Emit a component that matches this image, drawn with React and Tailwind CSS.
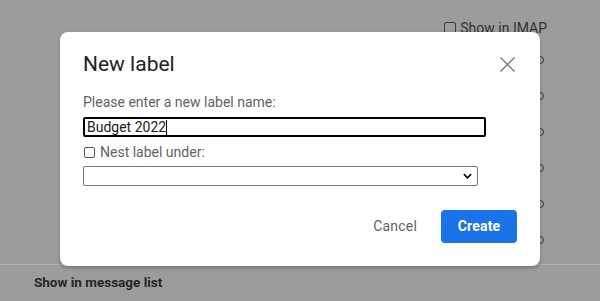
import React from 'react';

const Background = () => {
  const rows = [0, 1, 2, 3, 4, 5];
  return (
    <div className="flex flex-col h-full">
      <div className="flex justify-end items-center pt-[19px] pr-[53px] h-[37px] gap-[4px]">
        <span className="w-[12px] h-[12px] border border-[#3a3a3a] rounded-[2px]" />
        <span className="text-[14px] leading-[16px] text-[#333]">Show in IMAP</span>
      </div>
      <div className="flex flex-col items-end pr-[56px] pt-[19px] gap-[28px]">
        {rows.map((r) => (
          <span key={r} className="w-[8px] h-[8px] rounded-full border-[1.5px] border-[#3a3a3a]" />
        ))}
      </div>
      <div className="mt-auto border-t border-[#b0b0b0] h-[37px] flex items-center pl-[34px] pb-[2px]">
        <span className="text-[13.5px] font-bold text-[#262626]">Show in message list</span>
      </div>
    </div>
  );
};

const Dialog = () => {
  return (
    <div className="absolute left-[60px] top-[32px] w-[480px] h-[234px] bg-white rounded-[8px] shadow-[0_2px_4px_rgba(0,0,0,0.25)] px-[23px] pt-[19px]">
      <button className="absolute top-[25px] right-[25px] w-[15px] h-[15px] text-[#777]">
        <svg viewBox="0 0 15 15" width="15" height="15" fill="none" stroke="currentColor" strokeWidth="1.3">
          <path d="M0.5 0.5 L14.5 14.5 M14.5 0.5 L0.5 14.5" />
        </svg>
      </button>
      <h2 className="text-[21px] leading-[27px] text-[#202124]">New label</h2>
      <div className="mt-[14px] text-[14px] leading-[20px] text-[#5f6368]">Please enter a new label name:</div>
      <div className="mt-[5px] w-[403px] h-[20px] border-2 border-black rounded-[2px] flex items-center pl-[2px] text-[14px] text-[#202124]">
        Budget 2022<span className="w-px h-[15px] bg-black" />
      </div>
      <label className="mt-[6px] h-[18px] flex items-center gap-[5px] text-[14px] text-[#5f6368]">
        <span className="w-[11px] h-[11px] border border-[#555] rounded-[2px] ml-[1px]" />
        Nest label under:
      </label>
      <div className="mt-[5px] w-[395px] h-[20px] border border-[#777] rounded-[2px] flex items-center justify-end pr-[5px]">
        <svg viewBox="0 0 10 6" width="9" height="6" fill="none" stroke="#111" strokeWidth="2">
          <path d="M1 1 L5 5 L9 1" />
        </svg>
      </div>
      <div className="mt-[24px] flex justify-end items-center gap-[24px]">
        <span className="text-[14px] text-[#5f6368] tracking-[0.2px]">Cancel</span>
        <button className="w-[76px] h-[33px] rounded-[4px] bg-[#1a73e8] text-white text-[14px] font-bold tracking-[0.2px]">Create</button>
      </div>
    </div>
  );
};

export default function App() {
  return (
    <div className="w-[600px] h-[301px] relative overflow-hidden bg-[#9c9c9c]" style={{ fontFamily: 'Roboto, Arial, sans-serif' }}>
      <Background />
      <Dialog />
    </div>
  );
}
